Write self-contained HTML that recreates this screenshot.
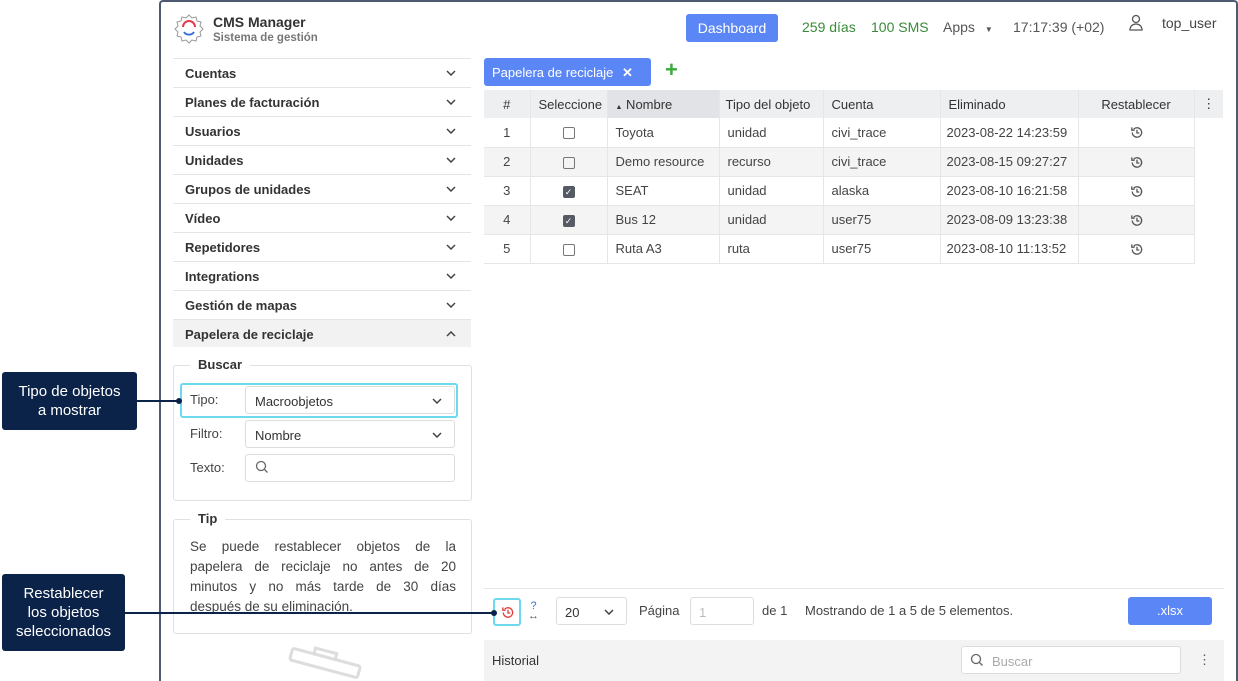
<!DOCTYPE html>
<html><head><meta charset="utf-8"><style>
*{box-sizing:border-box;margin:0;padding:0}
html,body{width:1238px;height:681px;overflow:hidden}
body{background:#fff;font-family:"Liberation Sans",sans-serif;font-size:13px;color:#333;position:relative}
.abs{position:absolute}
.frame{left:159px;top:0;width:1079px;height:681px;border:2px solid #4d5a72;border-bottom:none;border-radius:4px 4px 0 0}
.menu{left:173px;width:298px;height:29px;border-top:1px solid #e4e4e4;font-size:13px;font-weight:bold;color:#333;padding:7px 12px}
.chev{position:absolute;right:15px;top:11px}
.fs{border:1px solid #e0e0e0;border-radius:3px}
.leg{background:#fff;padding:0 8px;font-weight:bold;font-size:13px;color:#333}
.inp{border:1px solid #ddd;border-radius:3px;background:#fff}
table{border-collapse:collapse;font-size:13px;table-layout:fixed;width:739px}
td,th{height:29px;padding:0 8px;text-align:left;font-weight:normal;border-right:1px solid #e6e6e6;color:#444;white-space:nowrap;overflow:hidden;vertical-align:middle}
th{background:#eeeff1;color:#333;height:28px}
tr.g td{background:#f4f4f4}
tr td{border-bottom:1px solid #e6e6e6}
td svg{vertical-align:middle}
.cb{display:inline-block;width:12px;height:12px;border:1.5px solid #777;border-radius:2px;vertical-align:middle}
.cbc{background:#555a63;border-color:#555a63;color:#fff;font-size:9px;line-height:10px;text-align:center}
.call{background:#0c2349;color:#fff;font-size:15px;text-align:center;border-radius:3px}
.c{text-align:center}
.jl{text-align:justify;text-align-last:justify;height:20px}
</style></head><body>
<svg width="0" height="0" style="position:absolute"><defs>
<symbol id="ch" viewBox="0 0 10 6"><path d="M1 1l4 4 4-4" fill="none" stroke="#444" stroke-width="1.5"/></symbol>
<symbol id="rs" viewBox="0 0 16 16"><path d="M3.5 8a5 5 0 1 0 1.5-3.6" fill="none" stroke="currentColor" stroke-width="1.4"/><path d="M3 2.5v3h3" fill="none" stroke="currentColor" stroke-width="1.4"/><path d="M8.5 5v3.5h2.5" fill="none" stroke="currentColor" stroke-width="1.4"/></symbol>
</defs></svg>
<div class="abs frame"></div>
<svg class="abs" style="left:173px;top:13px" width="32" height="32" viewBox="0 0 32 32"><path d="M16 2l3 3 4-1 1 4 4 1-1 4 3 3-3 3 1 4-4 1-1 4-4-1-3 3-3-3-4 1-1-4-4-1 1-4-3-3 3-3-1-4 4-1 1-4 4 1z" fill="none" stroke="#999" stroke-width="1"/><path d="M10 14a6 6 0 0 1 12 0" fill="none" stroke="#e53b4e" stroke-width="2"/><path d="M11 19a6 6 0 0 0 10 0" fill="none" stroke="#3b6fd8" stroke-width="2"/></svg>
<div class="abs" style="left:213px;top:14px;font-weight:bold;font-size:14px;color:#333">CMS Manager</div>
<div class="abs" style="left:213px;top:32px;font-weight:bold;font-size:11.5px;color:#777">Sistema de gestión</div>
<div class="abs" style="left:686px;top:14px;width:92px;height:28px;background:#5b86f5;border-radius:3px;color:#fff;text-align:center;line-height:28px;font-size:14px">Dashboard</div>
<div class="abs" style="left:802px;top:19px;color:#3a8a3a;font-size:14px">259 días</div>
<div class="abs" style="left:871px;top:19px;color:#3a8a3a;font-size:14px">100 SMS</div>
<div class="abs" style="left:943px;top:19px;color:#555;font-size:14px">Apps <span style="font-size:8px;margin-left:6px">▼</span></div>
<div class="abs" style="left:1013px;top:19px;color:#555;font-size:14px">17:17:39 (+02)</div>
<svg class="abs" style="left:1128px;top:14px" width="16" height="18" viewBox="0 0 16 18"><circle cx="8" cy="5" r="3.5" fill="none" stroke="#555" stroke-width="1.3"/><path d="M2 16c0-4 3-6 6-6s6 2 6 6z" fill="none" stroke="#555" stroke-width="1.3"/></svg>
<div class="abs" style="left:1162px;top:15px;color:#444;font-size:14px">top_user</div>
<div class="abs menu" style="top:58px">Cuentas<svg class="chev" width="10" height="6"><use href="#ch"/></svg></div>
<div class="abs menu" style="top:87px">Planes de facturación<svg class="chev" width="10" height="6"><use href="#ch"/></svg></div>
<div class="abs menu" style="top:116px">Usuarios<svg class="chev" width="10" height="6"><use href="#ch"/></svg></div>
<div class="abs menu" style="top:145px">Unidades<svg class="chev" width="10" height="6"><use href="#ch"/></svg></div>
<div class="abs menu" style="top:174px">Grupos de unidades<svg class="chev" width="10" height="6"><use href="#ch"/></svg></div>
<div class="abs menu" style="top:203px">Vídeo<svg class="chev" width="10" height="6"><use href="#ch"/></svg></div>
<div class="abs menu" style="top:232px">Repetidores<svg class="chev" width="10" height="6"><use href="#ch"/></svg></div>
<div class="abs menu" style="top:261px">Integrations<svg class="chev" width="10" height="6"><use href="#ch"/></svg></div>
<div class="abs menu" style="top:290px">Gestión de mapas<svg class="chev" width="10" height="6"><use href="#ch"/></svg></div>
<div class="abs menu" style="top:319px;background:#f2f2f2;height:28px">Papelera de reciclaje<svg class="chev" width="10" height="6" style="transform:rotate(180deg)"><use href="#ch"/></svg></div>
<div class="abs fs" style="left:173px;top:365px;width:299px;height:136px"></div>
<div class="abs leg" style="left:190px;top:357px">Buscar</div>
<div class="abs" style="left:180px;top:383px;width:278px;height:35px;border:2px solid #6dd9ef;border-radius:3px"></div>
<div class="abs" style="left:190px;top:392px;color:#444">Tipo:</div>
<div class="abs inp" style="left:245px;top:386px;width:210px;height:28px;padding:7px 9px">Macroobjetos<svg style="position:absolute;right:12px;top:11px" width="10" height="6"><use href="#ch"/></svg></div>
<div class="abs" style="left:190px;top:426px;color:#444">Filtro:</div>
<div class="abs inp" style="left:245px;top:420px;width:210px;height:28px;padding:7px 9px">Nombre<svg style="position:absolute;right:12px;top:11px" width="10" height="6"><use href="#ch"/></svg></div>
<div class="abs" style="left:190px;top:460px;color:#444">Texto:</div>
<div class="abs inp" style="left:245px;top:454px;width:210px;height:28px"></div>
<svg class="abs" style="left:255px;top:460px" width="14" height="14"><circle cx="6" cy="6" r="4.5" fill="none" stroke="#666" stroke-width="1.3"/><path d="M9.5 9.5l3 3" stroke="#666" stroke-width="1.3"/></svg>
<div class="abs fs" style="left:173px;top:519px;width:299px;height:115px"></div>
<div class="abs leg" style="left:190px;top:511px">Tip</div>
<div class="abs" style="left:190px;top:537px;width:266px;font-size:13.5px;line-height:20px;color:#444">
<div class="jl">Se puede restablecer objetos de la</div>
<div class="jl">papelera de reciclaje no antes de 20</div>
<div class="jl">minutos y no más tarde de 30 días</div>
<div>después de su eliminación.</div>
</div>
<svg class="abs" style="left:285px;top:645px" width="80" height="36"><g transform="rotate(15 40 18)" fill="none" stroke="#ddd" stroke-width="3"><rect x="5" y="12" width="70" height="12" rx="2"/><rect x="27" y="6" width="22" height="6"/></g></svg>
<div class="abs" style="left:484px;top:58px;width:167px;height:28px;background:#5b86f5;border-radius:3px;color:#fff;padding:7px 8px;font-size:13px;white-space:nowrap">Papelera de reciclaje <b style="margin-left:5px">✕</b></div>
<div class="abs" style="left:665px;top:57px;color:#3aaa3a;font-size:22px;font-weight:bold">+</div>
<table class="abs" style="left:484px;top:90px">
<colgroup><col style="width:46px"><col style="width:77px"><col style="width:112px"><col style="width:104px"><col style="width:117px"><col style="width:138px"><col style="width:116px"><col style="width:29px"></colgroup>
<tr><th class="c">#</th><th style="padding:0 0 0 8px">Seleccione</th><th style="background:#e2e3e6"><span style="font-size:7px">▲</span> Nombre</th><th style="padding:0 6px">Tipo del objeto</th><th>Cuenta</th><th>Eliminado</th><th class="c">Restablecer</th><th class="c" style="border:none;padding:0">⋮</th></tr>
<tr><td class="c">1</td><td class="c"><span class="cb"></span></td><td>Toyota</td><td>unidad</td><td>civi_trace</td><td style="padding:0 6px">2023-08-22 14:23:59</td><td class="c" style="color:#555"><svg width="15" height="15"><use href="#rs"/></svg></td></tr>
<tr class="g"><td class="c">2</td><td class="c"><span class="cb"></span></td><td>Demo resource</td><td>recurso</td><td>civi_trace</td><td style="padding:0 6px">2023-08-15 09:27:27</td><td class="c" style="color:#555"><svg width="15" height="15"><use href="#rs"/></svg></td></tr>
<tr><td class="c">3</td><td class="c"><span class="cb cbc">✓</span></td><td>SEAT</td><td>unidad</td><td>alaska</td><td style="padding:0 6px">2023-08-10 16:21:58</td><td class="c" style="color:#555"><svg width="15" height="15"><use href="#rs"/></svg></td></tr>
<tr class="g"><td class="c">4</td><td class="c"><span class="cb cbc">✓</span></td><td>Bus 12</td><td>unidad</td><td>user75</td><td style="padding:0 6px">2023-08-09 13:23:38</td><td class="c" style="color:#555"><svg width="15" height="15"><use href="#rs"/></svg></td></tr>
<tr><td class="c">5</td><td class="c"><span class="cb"></span></td><td>Ruta A3</td><td>ruta</td><td>user75</td><td style="padding:0 6px">2023-08-10 11:13:52</td><td class="c" style="color:#555"><svg width="15" height="15"><use href="#rs"/></svg></td></tr>
</table>
<div class="abs" style="left:484px;top:588px;width:740px;height:1px;background:#e6e6e6"></div>
<div class="abs" style="left:493px;top:598px;width:28px;height:28px;border:2px solid #6dd9ef;border-radius:3px;color:#e53b3b"><svg style="position:absolute;left:5px;top:5px" width="15" height="15"><use href="#rs"/></svg></div>
<div class="abs" style="left:528px;top:601px;color:#3b6fd8;font-size:11px;line-height:10px;text-align:center">?<br><span style="color:#555">↔</span></div>
<div class="abs inp" style="left:556px;top:597px;width:71px;height:28px;padding:7px 8px">20<svg style="position:absolute;right:12px;top:11px" width="10" height="6"><use href="#ch"/></svg></div>
<div class="abs" style="left:639px;top:603px;color:#444">Página</div>
<div class="abs inp" style="left:690px;top:597px;width:64px;height:28px;padding:7px 8px;color:#bbb">1</div>
<div class="abs" style="left:762px;top:603px;color:#444">de 1</div>
<div class="abs" style="left:805px;top:603px;color:#444">Mostrando de 1 a 5 de 5 elementos.</div>
<div class="abs" style="left:1128px;top:597px;width:84px;height:28px;background:#5b86f5;border-radius:3px;color:#fff;text-align:center;line-height:28px">.xlsx</div>
<div class="abs" style="left:484px;top:640px;width:740px;height:41px;background:#f3f3f3"></div>
<div class="abs" style="left:492px;top:653px;color:#333">Historial</div>
<div class="abs inp" style="left:961px;top:646px;width:220px;height:28px;padding:7px 30px;color:#aaa">Buscar</div>
<svg class="abs" style="left:970px;top:653px" width="14" height="14"><circle cx="6" cy="6" r="4.5" fill="none" stroke="#666" stroke-width="1.3"/><path d="M9.5 9.5l3 3" stroke="#666" stroke-width="1.3"/></svg>
<div class="abs" style="left:1198px;top:652px;color:#555">⋮</div>
<div class="abs call" style="left:2px;top:372px;width:135px;height:58px;padding-top:10px;line-height:19px">Tipo de objetos<br>a mostrar</div>
<div class="abs" style="left:137px;top:400px;width:42px;height:2px;background:#0c2349"></div>
<div class="abs" style="left:176px;top:398px;width:6px;height:6px;border-radius:50%;background:#0c2349"></div>
<div class="abs call" style="left:2px;top:574px;width:123px;height:77px;padding-top:10px;line-height:19px">Restablecer<br>los objetos<br>seleccionados</div>
<div class="abs" style="left:125px;top:612px;width:370px;height:2px;background:#0c2349"></div>
<div class="abs" style="left:491px;top:610px;width:6px;height:6px;border-radius:50%;background:#0c2349"></div>
</body></html>
